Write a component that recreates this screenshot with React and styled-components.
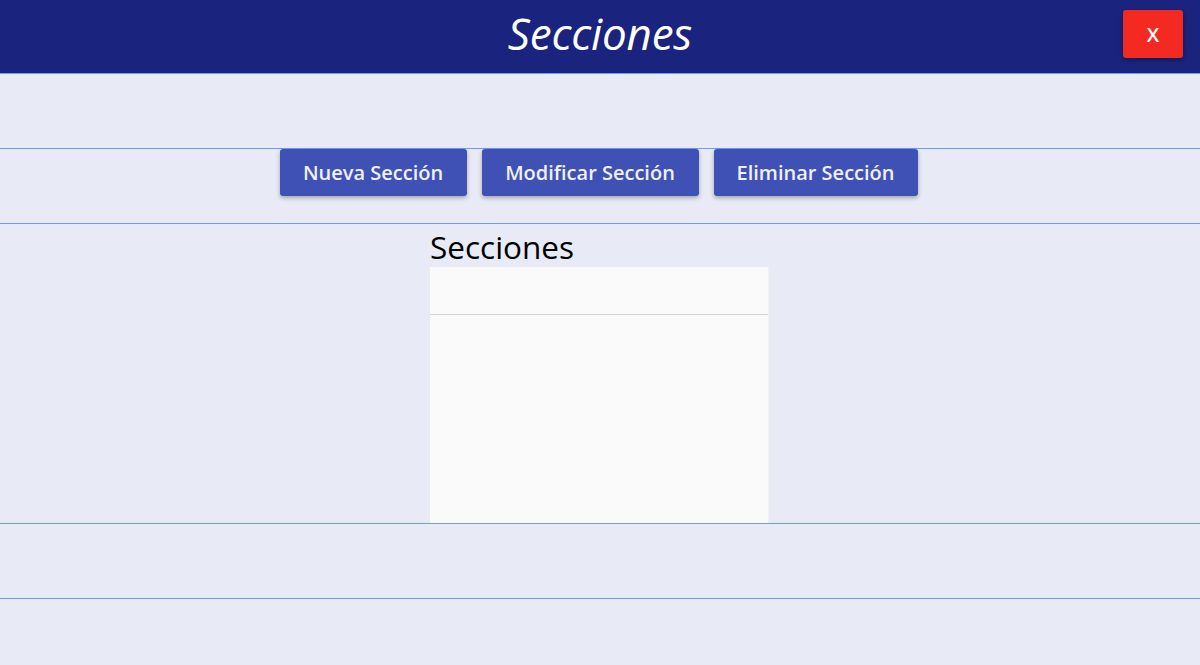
import React from 'react';
import styled, { createGlobalStyle } from 'styled-components';

const GlobalStyle = createGlobalStyle`
	*, *::before, *::after {
		box-sizing: border-box;
	}
	html, body {
		margin: 0;
		padding: 0;
		background: #e8eaf6;
		font-family: 'Open Sans', 'Noto Sans', sans-serif;
	}
`;

const Page = styled.div`
	width: 100%;
	height: 665px;
	background: #e8eaf6;
	display: flex;
	flex-direction: column;
	overflow: hidden;
`;

const Header = styled.header`
	height: 73px;
	flex-shrink: 0;
	background: #1a237e;
	display: flex;
	align-items: center;
	justify-content: center;
	position: relative;
`;

const Title = styled.h1`
	margin: 0 0 8px 0;
	color: #ffffff;
	font-style: italic;
	font-weight: 400;
	font-size: 44px;
	letter-spacing: -0.2px;
`;

const CloseButton = styled.button`
	position: absolute;
	top: 10px;
	right: 17px;
	width: 60px;
	height: 48px;
	border: none;
	border-radius: 3px;
	background: #f42a22;
	color: #ffffff;
	font-family: inherit;
	font-size: 20px;
	font-weight: 600;
	box-shadow: 0 2px 4px rgba(0, 0, 0, 0.35);
	cursor: pointer;
`;

const Row = styled.div`
	height: ${(props) => props.height}px;
	flex-shrink: 0;
	border-top: 1px solid #6f9cf0;
	display: flex;
	justify-content: center;
`;

const ButtonBar = styled(Row)`
	gap: 15px;
	align-items: flex-start;
	padding-right: 3px;
`;

const ActionButton = styled.button`
	width: ${(props) => props.width}px;
	height: 47px;
	border: none;
	border-radius: 3px;
	background: #3f51b5;
	color: #eef0fa;
	font-family: inherit;
	font-size: 20px;
	font-weight: 600;
	box-shadow: 0 2px 4px rgba(0, 0, 0, 0.3);
	cursor: pointer;
`;

const ListArea = styled(Row)`
	flex-direction: column;
	align-items: flex-start;
	padding-left: 430px;
`;

const ListLabel = styled.div`
	font-size: 31.5px;
	line-height: 40px;
	color: #000000;
	margin-top: 3px;
`;

const ListBox = styled.div`
	width: 339px;
	flex: 1;
	background: #fafafa;
	display: flex;
	flex-direction: column;
	border-right: 1px solid #f0f0f0;
`;

const ListHead = styled.div`
	height: 48px;
	flex-shrink: 0;
	border-bottom: 1px solid #d4d4d4;
`;

const Tail = styled.div`
	flex: 1;
	border-top: 1px solid #6f9cf0;
`;

export default function App() {
	return (
		<Page>
			<GlobalStyle />
			<Header>
				<Title>Secciones</Title>
				<CloseButton>X</CloseButton>
			</Header>
			<Row height={75} />
			<ButtonBar height={75}>
				<ActionButton width={187}>Nueva Sección</ActionButton>
				<ActionButton width={217}>Modificar Sección</ActionButton>
				<ActionButton width={204}>Eliminar Sección</ActionButton>
			</ButtonBar>
			<ListArea height={300}>
				<ListLabel>Secciones</ListLabel>
				<ListBox>
					<ListHead />
				</ListBox>
			</ListArea>
			<Row height={75} />
			<Tail />
		</Page>
	);
}
